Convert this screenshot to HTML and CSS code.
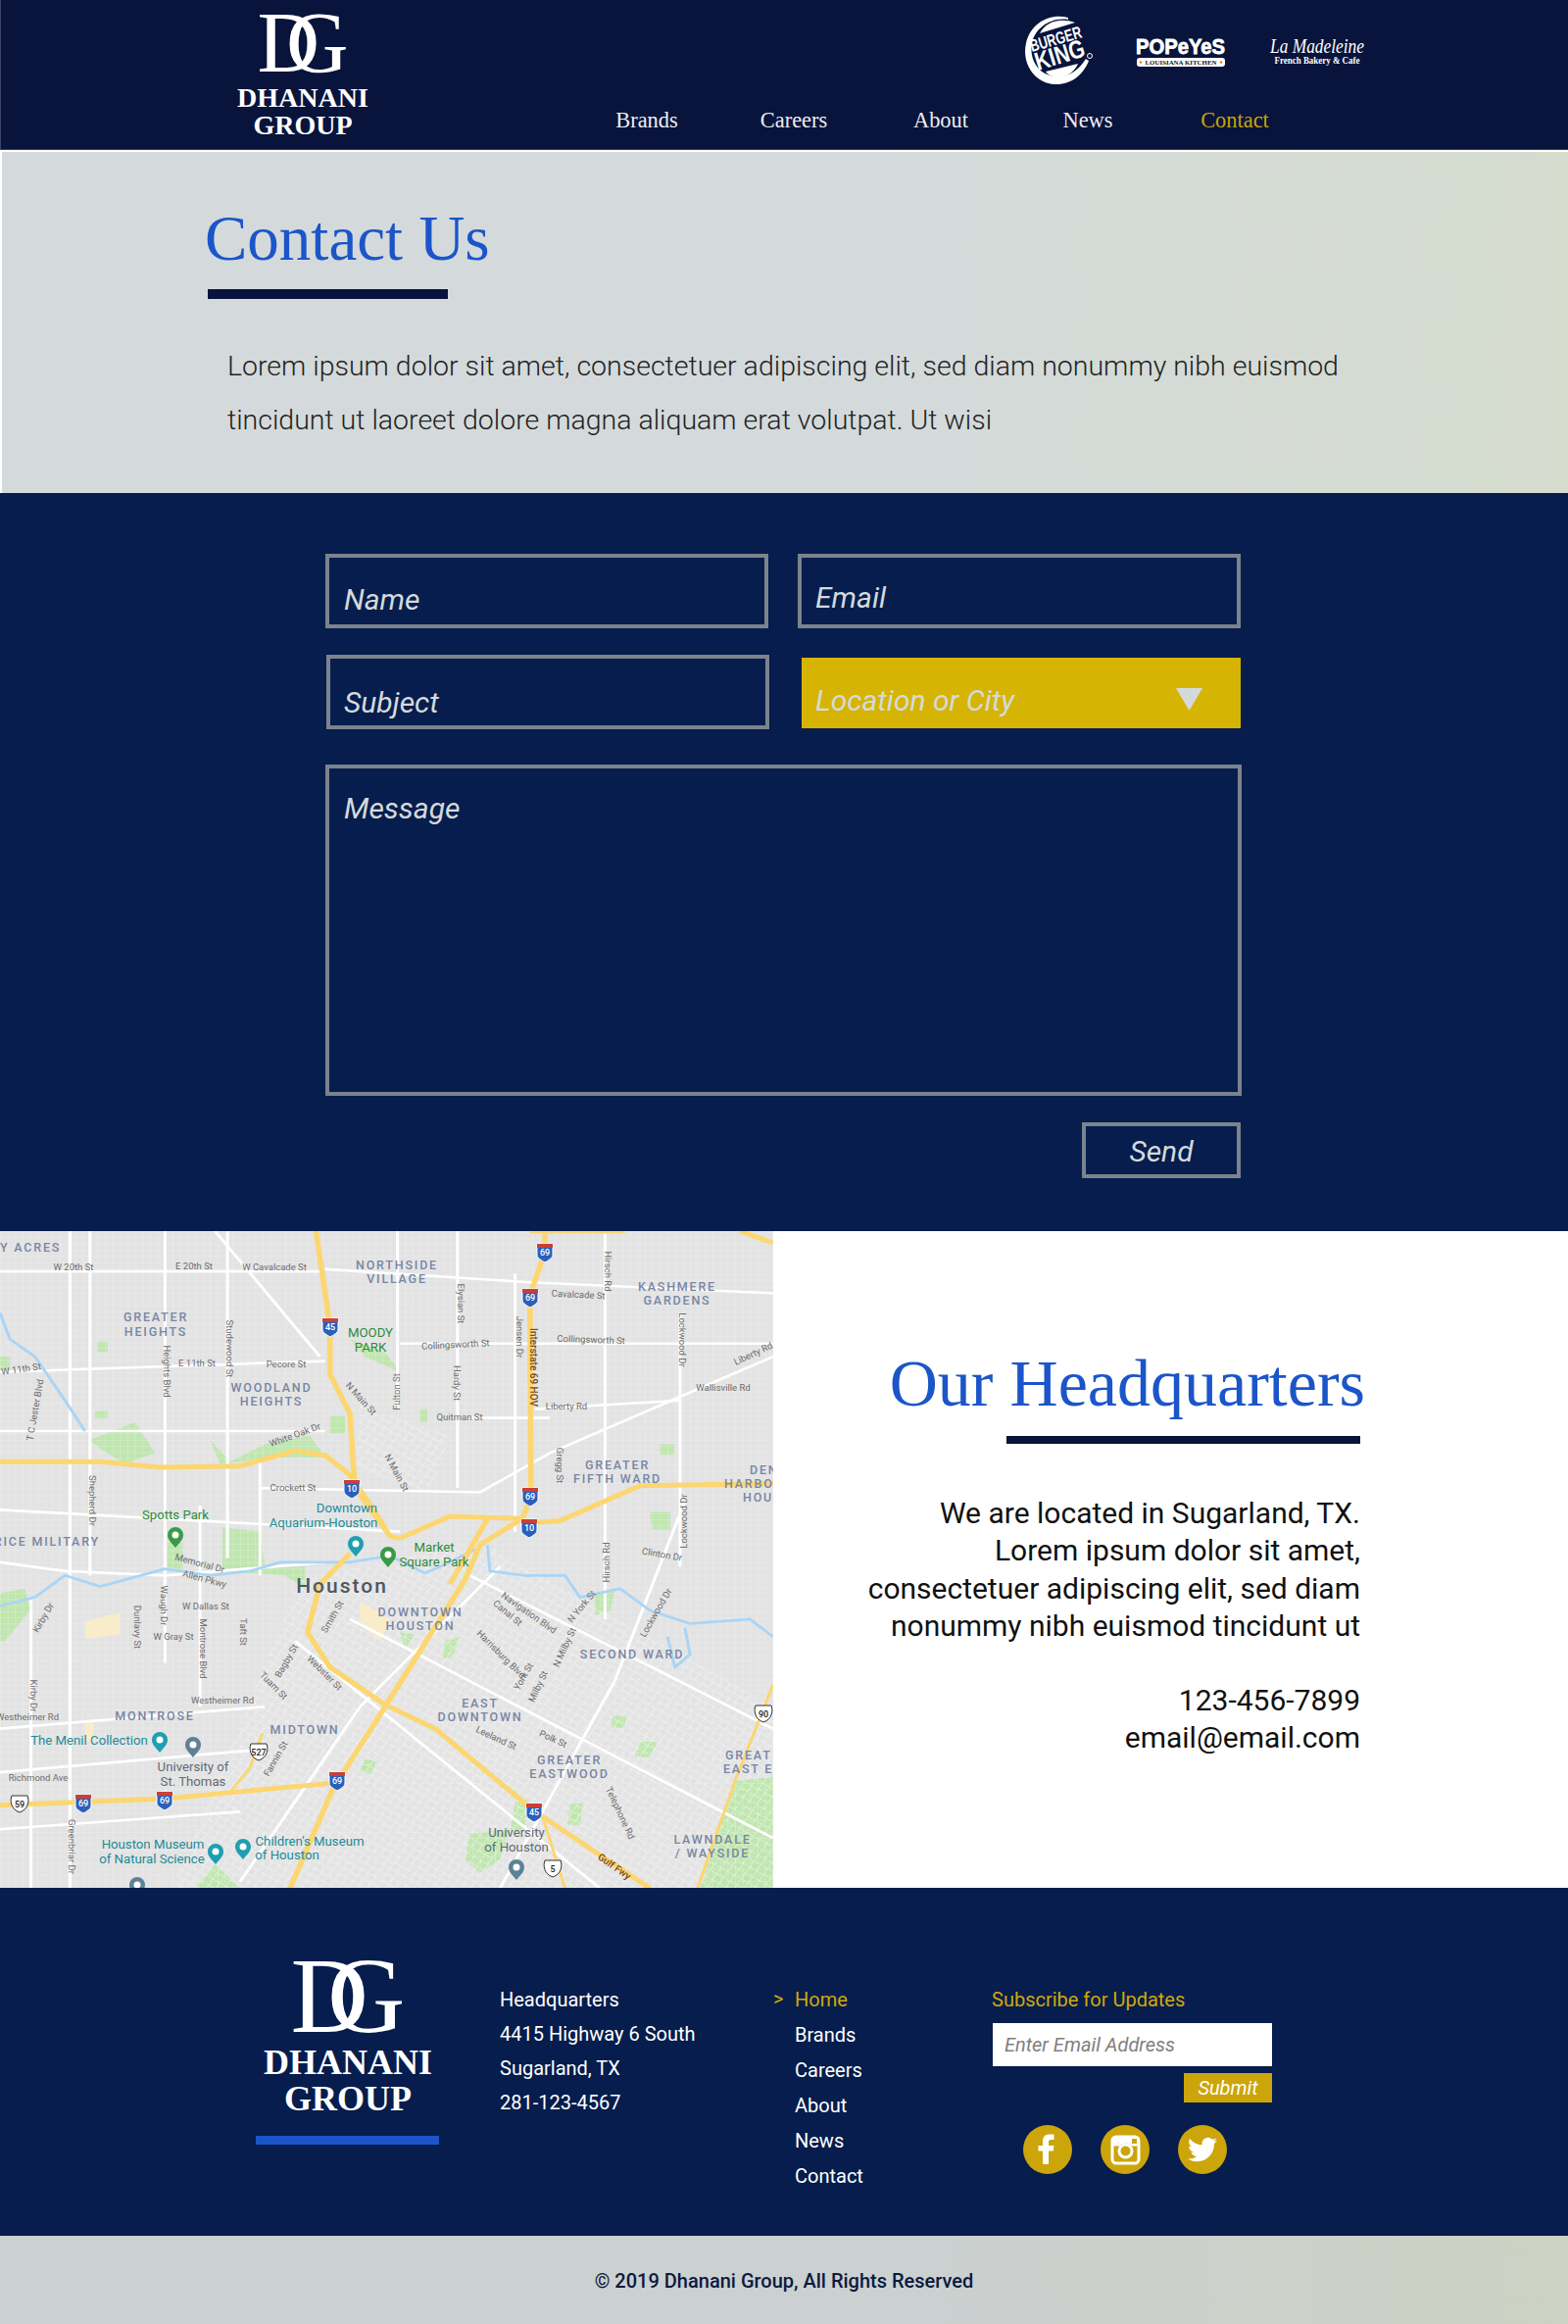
FILE: index.html
```html
<!DOCTYPE html>
<html lang="en">
<head>
<meta charset="utf-8">
<title>Contact Us | Dhanani Group</title>
<link rel="stylesheet" href="styles.css">
</head>
<body>
<header class="site-header">
  <a class="brand">
    <div class="monogram">DG</div>
    <div class="brand-name">DHANANI</div>
    <div class="brand-name">GROUP</div>
  </a>
  <div class="header-right">
    <div class="brand-logos">
      <svg class="logo-bk" width="72" height="72" viewBox="0 0 72 72">
        <path d="M45 2C28-3 7 6 2 28c-5 22 10 41 29 42 16 1 29-9 35-24l-3-2c-8 13-20 20-32 18C14 60 5 44 8 28 11 13 27 1 45 4z" fill="#fff"/>
        <path d="M16 18C21 7 36 1 52 7z" fill="#fff"/>
        <path d="M22 57l33-8C51 58 44 62 36 63c-6 0-11-2-14-6z" fill="#fff"/>
        <text class="bk-text" transform="translate(8 37) rotate(-16)" font-size="17.500" textLength="54" lengthAdjust="spacingAndGlyphs">BURGER</text>
        <text class="bk-text" transform="translate(14 56) rotate(-17)" font-size="26" textLength="52" lengthAdjust="spacingAndGlyphs">KING</text>
        <circle cx="67" cy="41" r="2.500" fill="none" stroke="#fff"/>
      </svg>
      <svg class="logo-popeyes" width="92" height="32" viewBox="0 0 92 32">
        <text class="pop-text" x="0" y="18" font-size="22" textLength="91" lengthAdjust="spacingAndGlyphs">POPeYeS</text>
        <rect x="1" y="22" width="90" height="9" rx="3" fill="#fff"/>
        <circle cx="5" cy="26.500" r="1.300" fill="#e8792b"/>
        <circle cx="87" cy="26.500" r="1.300" fill="#e8792b"/>
        <text class="pop-sub" x="46" y="29" font-size="6.400" text-anchor="middle" textLength="73" lengthAdjust="spacingAndGlyphs">LOUISIANA KITCHEN</text>
      </svg>
      <svg class="logo-lm" width="98" height="32" viewBox="0 0 98 32">
        <text class="lm-name" x="1" y="18" font-size="22" textLength="96" lengthAdjust="spacingAndGlyphs">La Madeleine</text>
        <text class="lm-sub" x="49" y="29" font-size="10" text-anchor="middle" textLength="87" lengthAdjust="spacingAndGlyphs">French Bakery &amp; Cafe</text>
      </svg>
    </div>
    <nav class="main-nav">
      <a>Brands</a><a>Careers</a><a>About</a><a>News</a><a class="is-active">Contact</a>
    </nav>
  </div>
</header>

<section class="hero">
  <h1>Contact Us</h1>
  <div class="hero-bar"></div>
  <p>Lorem ipsum dolor sit amet, consectetuer adipiscing elit, sed diam nonummy nibh euismod tincidunt ut laoreet dolore magna aliquam erat volutpat. Ut wisi</p>
</section>

<section class="contact">
  <form class="contact-form">
    <div class="field field-name">Name</div>
    <div class="field field-email">Email</div>
    <div class="field field-subject">Subject</div>
    <div class="select">
      <span>Location or City</span>
      <svg class="select-arrow" width="27" height="23" viewBox="0 0 27 23"><path d="M0 0h27L13.500 23z" fill="#d4dadb"/></svg>
    </div>
    <div class="field field-message">Message</div>
    <div class="send">Send</div>
  </form>
</section>

<section class="hq">
  <div class="map">
    <svg width="789" height="670" viewBox="0 0 789 670">
      <defs>
        <pattern id="gridA" width="15" height="14" patternUnits="userSpaceOnUse">
          <path d="M0 0H15M0 0V14" stroke="#f5f5f5" stroke-width="1.100" fill="none"/>
        </pattern>
        <pattern id="gridB" width="16" height="16" patternUnits="userSpaceOnUse" patternTransform="rotate(32)">
          <path d="M0 0H16M0 0V16" stroke="#fbfbfb" stroke-width="1.600" fill="none"/>
        </pattern>
        <g id="ihw">
          <path d="M-8-8H8V3C8 7 3 9 0 11-3 9-8 7-8 3z" fill="#2a5fbd" stroke="#fff" stroke-width="1"/>
          <path d="M-8-8H8V-4H-8z" fill="#c8403a"/>
        </g>
        <g id="ush"><path d="M-8-8H8C10-3 9 6 0 9-9 6-10-3-8-8z" fill="#fff" stroke="#333" stroke-width="1"/></g>
        <g id="pin"><path d="M0 0C-4-5-8-8-8-13A8 8 0 0 1 8-13C8-8 4-5 0 0z"/><circle cy="-13" r="3.500" fill="#fff"/></g>
      </defs>
      <rect width="789" height="670" fill="#e3e3e3"/>
      <g transform="translate(0 -5.800) scale(.5102 .4464)">
        <g fill="#bfe6ae">
          <path d="M445 690L520 700 530 780 610 780 610 830 570 800 445 790z"/>
          <path d="M700 260L770 290 800 335 730 300z"/>
          <path d="M180 490L270 450 310 520 250 545 200 510z"/>
          <path d="M420 490L460 540 530 500 620 480 650 530 560 530 440 545z"/>
          <path d="M335 725L365 725 365 790 335 780z"/>
          <path d="M0 840L50 830 60 880 10 950 0 950z"/>
          <path d="M940 1390L1020 1380 1000 1450 960 1480 930 1450z"/>
          <path d="M1470 1270L1546 1260V1515H1400z"/>
          <path d="M390 1515L430 1460 480 1515z"/>
          <path d="M1300 655h40v40h-35z"/><path d="M195 265h20v24h-20z"/><path d="M1320 500h28v24h-28z"/>
          <path d="M1190 840l40-8-10 50-30 8z"/><path d="M890 950l30-10-15 45-20 5z"/><path d="M800 930l30 5-20 35z"/>
          <path d="M730 1220l25 5-15 30-20-8z"/><path d="M1140 1320h25l-5 50h-25z"/><path d="M1225 1120h28l-5 28h-25z"/>
          <path d="M1280 1180h35l-15 35h-30z"/><path d="M1030 1320l25-10-5 70-30 5z"/><path d="M840 420h15v30h-15z"/>
          <path d="M190 425h25v15h-25z"/><path d="M0 300h20v30h-20z"/><path d="M660 435h30v40h-30z"/>
        </g>
        <rect width="1546" height="1530" fill="url(#gridA)"/>
        <path d="M600 810L960 720 1546 1100V1530H340z" fill="url(#gridB)"/>
        <path d="M720 410L900 480 860 610 710 560z" fill="url(#gridB)"/>
        <g fill="#f8eccb">
          <path d="M170 905l70-20v50l-70 10z"/><path d="M720 860l60 40-20 50-40-40z"/><path d="M170 1130h18v50h-18z"/>
        </g>
        <g fill="none" stroke="#fff" stroke-width="6">
          <path d="M140 13V1515M330 13V1000M455 13V760M400 640V1100M62 850V1515M795 13V420M1210 13V900M1360 200V780M915 13V600M180 13V800M520 540V800"/>
          <path d="M0 105H640M650 100L1060 130 1546 155M0 335L650 310M800 270H1546M0 650L800 700M0 1250L500 1200M0 1150L530 1100M0 470L650 470M1070 420L1360 400"/>
          <path d="M1546 300L1100 520 960 610 520 600M940 440H1100M430 13L640 300M1030 110V700M0 770L130 790 330 800 650 770"/>
          <path d="M940 800L1546 1150M1370 630L1230 1040 1000 1515M700 900L1546 1400M480 1500L720 1100 1000 780M590 950L1200 1515M0 1380L480 1340"/>
        </g>
        <g fill="none" stroke="#a9d5f7" stroke-width="6">
          <path d="M0 200L20 260 70 300 130 400 170 470"/>
          <path d="M0 870L70 850 130 800 200 825 330 785 420 800 500 790 560 770 700 770 780 755 850 795 900 770 950 740"/>
          <path d="M975 730L980 790 1050 800 1130 800 1160 850 1240 830 1300 880 1380 910 1500 900 1546 940"/>
          <path d="M1370 920L1380 980 1350 1010 1335 940"/>
        </g>
        <g fill="none" stroke="#fcd670" stroke-width="11" stroke-linejoin="round">
          <path d="M632 13L660 230 660 340 700 430 705 520 710 600 780 710 800 715"/>
          <path d="M0 540L200 540 320 553 480 550 590 515 650 525 700 570 770 690"/>
          <path d="M800 715L900 665 1040 670 1060 680 1120 675 1280 595 1546 590"/>
          <path d="M1090 13L1090 60 1060 160 1062 620 1045 670 960 730 930 810 770 1100 665 1290 580 1515"/>
          <path d="M0 1325L330 1310 660 1275"/>
          <path d="M700 750L640 820 615 930 660 1010 770 1095 870 1150 1070 1340 1300 1515"/>
          <path d="M1060 13L1250 13M1480 13L1546 40M975 670L900 820"/>
        </g>
        <g fill="none" stroke="#fcd670" stroke-width="6">
          <path d="M1085 1350L1130 1515M1546 1050L1470 1270 1395 1515M525 1160L500 1240 460 1295"/>
        </g>
      </g>

      <g class="map-hood">
        <text x="0" y="21">Y ACRES</text>
        <text x="405" y="39" class="mid">NORTHSIDE</text><text x="405" y="53" class="mid">VILLAGE</text>
        <text x="691" y="61" class="mid">KASHMERE</text><text x="691" y="75" class="mid">GARDENS</text>
        <text x="159" y="92" class="mid">GREATER</text><text x="159" y="107" class="mid">HEIGHTS</text>
        <text x="277" y="164" class="mid">WOODLAND</text><text x="277" y="178" class="mid">HEIGHTS</text>
        <text x="630" y="243" class="mid">GREATER</text><text x="630" y="257" class="mid">FIFTH WARD</text>
        <text x="765" y="248">DEN</text><text x="739" y="262">HARBO</text><text x="758" y="276">HOU</text>
        <text x="102" y="321" class="end">RICE MILITARY</text>
        <text x="429" y="393" class="mid">DOWNTOWN</text><text x="429" y="407" class="mid">HOUSTON</text>
        <text x="645" y="436" class="mid">SECOND WARD</text>
        <text x="490" y="486" class="mid">EAST</text><text x="490" y="500" class="mid">DOWNTOWN</text>
        <text x="158" y="499" class="mid">MONTROSE</text>
        <text x="311" y="513" class="mid">MIDTOWN</text>
        <text x="581" y="544" class="mid">GREATER</text><text x="581" y="558" class="mid">EASTWOOD</text>
        <text x="740" y="539">GREAT</text><text x="738" y="553">EAST E</text>
        <text x="727" y="625" class="mid">LAWNDALE</text><text x="727" y="639" class="mid">/ WAYSIDE</text>
      </g>
      <text class="map-city" x="349" y="369" text-anchor="middle">Houston</text>
      <g class="map-poi map-green">
        <text x="378" y="108">MOODY</text><text x="378" y="123">PARK</text>
        <text x="179" y="294">Spotts Park</text>
        <text x="443" y="327">Market</text><text x="443" y="342">Square Park</text>
      </g>
      <g class="map-poi map-teal">
        <text x="354" y="287">Downtown</text><text x="330" y="302">Aquarium-Houston</text>
        <text x="91" y="524">The Menil Collection</text>
        <text x="156" y="630">Houston Museum</text><text x="155" y="645">of Natural Science</text>
        <text x="316" y="627">Children's Museum</text><text x="293" y="641">of Houston</text>
      </g>
      <g class="map-poi map-gray">
        <text x="197" y="551">University of</text><text x="197" y="566">St. Thomas</text>
        <text x="527" y="618">University</text><text x="527" y="633">of Houston</text>
      </g>
      <g class="map-street">
        <text x="75" y="40">W 20th St</text><text x="198" y="39">E 20th St</text><text x="280" y="40">W Cavalcade St</text>
        <text transform="translate(590 68) rotate(3)">Cavalcade St</text>
        <text transform="translate(465 119) rotate(-3)">Collingsworth St</text>
        <text transform="translate(603 114) rotate(2)">Collingsworth St</text>
        <text x="292" y="139">Pecore St</text><text x="201" y="138">E 11th St</text>
        <text transform="translate(22 144) rotate(-8)">W 11th St</text>
        <text x="578" y="182">Liberty Rd</text><text x="469" y="193">Quitman St</text><text x="738" y="163">Wallisville Rd</text>
        <text x="299" y="265">Crockett St</text><text x="210" y="386">W Dallas St</text><text x="177" y="417">W Gray St</text>
        <text x="227" y="482">Westheimer Rd</text><text x="28" y="499">Westheimer Rd</text><text x="39" y="561">Richmond Ave</text>
        <text transform="translate(203 342) rotate(15)">Memorial Dr</text>
        <text transform="translate(208 358) rotate(15)">Allen Pkwy</text>
        <text transform="translate(302 211) rotate(-20)">White Oak Dr</text>
        <text transform="translate(231 120) rotate(90)">Studewood St</text>
        <text transform="translate(167 143) rotate(90)">Heights Blvd</text>
        <text transform="translate(467 74) rotate(90)">Elysian St</text>
        <text transform="translate(527 108) rotate(90)">Jensen Dr</text>
        <text transform="translate(617 41) rotate(90)">Hirsch Rd</text>
        <text transform="translate(693 111) rotate(90)">Lockwood Dr</text>
        <text transform="translate(408 164) rotate(-90)">Fulton St</text>
        <text transform="translate(463 155) rotate(90)">Hardy St</text>
        <text transform="translate(366 173) rotate(48)">N Main St</text>
        <text transform="translate(402 248) rotate(62)">N Main St</text>
        <text transform="translate(568 239) rotate(90)">Gregg St</text>
        <text transform="translate(91 275) rotate(90)">Shepherd Dr</text>
        <text transform="translate(701 296) rotate(-90)">Lockwood Dr</text>
        <text transform="translate(622 338) rotate(-90)">Hirsch Rd</text>
        <text transform="translate(675 333) rotate(10)">Clinton Dr</text>
        <text transform="translate(538 392) rotate(35)">Navigation Blvd</text>
        <text transform="translate(516 392) rotate(40)">Canal St</text>
        <text transform="translate(596 385) rotate(-50)">N York St</text>
        <text transform="translate(672 391) rotate(-60)">Lockwood Dr</text>
        <text transform="translate(509 434) rotate(45)">Harrisburg Blvd</text>
        <text transform="translate(579 426) rotate(-65)">N Milby St</text>
        <text transform="translate(537 456) rotate(-60)">York St</text>
        <text transform="translate(552 466) rotate(-65)">Milby St</text>
        <text transform="translate(47 396) rotate(-60)">Kirby Dr</text>
        <text transform="translate(164 382) rotate(90)">Waugh Dr</text>
        <text transform="translate(137 404) rotate(90)">Dunlavy St</text>
        <text transform="translate(204 426) rotate(90)">Montrose Blvd</text>
        <text transform="translate(245 409) rotate(90)">Taft St</text>
        <text transform="translate(342 395) rotate(-60)">Smith St</text>
        <text transform="translate(295 440) rotate(-60)">Bagby St</text>
        <text transform="translate(329 453) rotate(45)">Webster St</text>
        <text transform="translate(277 466) rotate(45)">Tuam St</text>
        <text transform="translate(284 540) rotate(-60)">Fannin St</text>
        <text transform="translate(505 520) rotate(25)">Leeland St</text>
        <text transform="translate(563 521) rotate(25)">Polk St</text>
        <text transform="translate(630 595) rotate(65)">Telephone Rd</text>
        <text transform="translate(31 474) rotate(90)">Kirby Dr</text>
        <text transform="translate(70 628) rotate(90)">Greenbriar Dr</text>
        <text transform="translate(39 183) rotate(-80)">T C Jester Blvd</text>
        <text transform="translate(770 128) rotate(-25)">Liberty Rd</text>
      </g>
      <text class="map-hwy" transform="translate(541 139) rotate(90)" text-anchor="middle">Interstate 69 HOV</text>
      <text class="map-hwy" transform="translate(625 651) rotate(35)" text-anchor="middle">Gulf Fwy</text>
      <g class="map-shields">
        <use href="#ihw" x="556" y="21"/><text x="556" y="25">69</text>
        <use href="#ihw" x="541" y="67"/><text x="541" y="71">69</text>
        <use href="#ihw" x="337" y="97"/><text x="337" y="101">45</text>
        <use href="#ihw" x="359" y="262"/><text x="359" y="266">10</text>
        <use href="#ihw" x="541" y="270"/><text x="541" y="274">69</text>
        <use href="#ihw" x="540" y="302"/><text x="540" y="306">10</text>
        <use href="#ihw" x="344" y="560"/><text x="344" y="564">69</text>
        <use href="#ihw" x="168" y="580"/><text x="168" y="584">69</text>
        <use href="#ihw" x="85" y="583"/><text x="85" y="587">69</text>
        <use href="#ihw" x="545" y="592"/><text x="545" y="596">45</text>
      </g>
      <g class="map-us">
        <use href="#ush" x="20" y="584"/><text x="20" y="588">59</text>
        <use href="#ush" x="264" y="531"/><text x="264" y="535">527</text>
        <use href="#ush" x="564" y="650"/><text x="564" y="654">5</text>
        <use href="#ush" x="779" y="492"/><text x="779" y="496">90</text>
      </g>
      <g fill="#3b9a46">
        <use href="#pin" x="179" y="323"/><use href="#pin" x="396" y="343"/>
      </g>
      <g fill="#1f9fb0">
        <use href="#pin" x="363" y="332"/><use href="#pin" x="163" y="532"/><use href="#pin" x="220" y="646"/><use href="#pin" x="248" y="641"/>
      </g>
      <g fill="#5d8196">
        <use href="#pin" x="197" y="537"/><use href="#pin" x="527" y="662"/><use href="#pin" x="140" y="680"/>
      </g>
    </svg>
  </div>
  <div class="hq-info">
    <h2>Our Headquarters</h2>
    <div class="hq-bar"></div>
    <p>We are located in Sugarland, TX.<br>Lorem ipsum dolor sit amet,<br>consectetuer adipiscing elit, sed diam<br>nonummy nibh euismod tincidunt ut</p>
    <p class="hq-contact">123-456-7899<br>email@email.com</p>
  </div>
</section>

<footer class="site-footer">
  <div class="footer-brand">
    <div class="monogram monogram-lg">DG</div>
    <div class="footer-name">DHANANI</div>
    <div class="footer-name">GROUP</div>
    <div class="footer-bar"></div>
  </div>
  <ul class="footer-address">
    <li>Headquarters</li>
    <li>4415 Highway 6 South</li>
    <li>Sugarland, TX</li>
    <li>281-123-4567</li>
  </ul>
  <ul class="footer-links">
    <li class="is-active"><span class="caret">&gt;</span>Home</li>
    <li>Brands</li>
    <li>Careers</li>
    <li>About</li>
    <li>News</li>
    <li>Contact</li>
  </ul>
  <div class="subscribe">
    <div class="subscribe-title">Subscribe for Updates</div>
    <div class="subscribe-input">Enter Email Address</div>
    <div class="subscribe-btn">Submit</div>
    <div class="socials">
      <svg width="50" height="50" viewBox="0 0 50 50"><circle cx="25" cy="25" r="25" fill="#cca50a"/><path d="M20 40V26.500H15.500V21H20V16.500C20 12 22.800 9.500 26.500 9.500H31.500V15H28.500C26.600 15 26 16 26 17.500V21H31.500L30.700 26.500H26V40z" fill="#fff"/></svg>
      <svg width="50" height="50" viewBox="0 0 50 50"><circle cx="25" cy="25" r="25" fill="#cca50a"/><rect x="12" y="12" width="27" height="27" rx="4" fill="none" stroke="#fff" stroke-width="3"/><path d="M12 21.500h7a8.500 8.500 0 0 1 13 0h7V15a3 3 0 0 0-3-3H15a3 3 0 0 0-3 3z" fill="#fff"/><circle cx="25.500" cy="26.500" r="6.500" fill="none" stroke="#fff" stroke-width="3"/><rect x="32" y="14" width="5" height="5" fill="#cca50a"/></svg>
      <svg width="50" height="50" viewBox="0 0 50 50"><circle cx="25" cy="25" r="25" fill="#cca50a"/><path transform="translate(10 10) scale(1.250)" d="M23.953 4.570a10 10 0 0 1-2.825.775 4.958 4.958 0 0 0 2.163-2.723c-.951.555-2.005.959-3.127 1.184a4.920 4.920 0 0 0-8.384 4.482C7.690 8.095 4.067 6.130 1.640 3.162a4.822 4.822 0 0 0-.666 2.475c0 1.710.870 3.213 2.188 4.096a4.904 4.904 0 0 1-2.228-.616v.060a4.923 4.923 0 0 0 3.946 4.827 4.996 4.996 0 0 1-2.212.085 4.936 4.936 0 0 0 4.604 3.417 9.867 9.867 0 0 1-6.102 2.105c-.390 0-.779-.023-1.170-.067a13.995 13.995 0 0 0 7.557 2.209c9.053 0 13.998-7.496 13.998-13.985 0-.210 0-.420-.015-.630A9.935 9.935 0 0 0 24 4.590z" fill="#fff"/></svg>
    </div>
  </div>
</footer>
<div class="copyright">© 2019 Dhanani Group, All Rights Reserved</div>
</body>
</html>
```
FILE: styles.css
```css
* { box-sizing: border-box; }
html, body { margin: 0; padding: 0; }
body { background: #fff; font-family: Roboto, "Liberation Sans", sans-serif; width: 1600px; }
ul { list-style: none; margin: 0; padding: 0; }
h1, h2, p { margin: 0; }

/* header */
.site-header {
  display: flex;
  height: 153px;
  background: #08143b;
  border-left: 1px solid #3a4565;
  border-bottom: 1px solid #2d3a60;
  margin-bottom: 2px;
}
.brand { display: block; width: 154px; margin-left: 231px; text-align: center; color: #fff; padding-top: 2px; }
.monogram { font: 400 88px/84px "Liberation Serif", serif; height: 84px; color: #fff; letter-spacing: -34px; padding-right: 34px; white-space: nowrap; }
.brand-name { font: 700 28px/28px "Liberation Serif", serif; }
.header-right { margin-left: 199px; padding-top: 17px; }
.brand-logos { display: flex; align-items: center; height: 70px; margin-left: 460px; }
.logo-bk { flex: none; }
.logo-popeyes { margin-left: 42px; margin-top: 2px; flex: none; }
.logo-lm { margin-left: 44px; margin-top: -1px; flex: none; }
.lm-name { font-family: "Liberation Serif", serif; font-style: italic; fill: #fff; }
.lm-sub { font-family: "Liberation Serif", serif; font-weight: 700; fill: #fff; }
.bk-text { font-family: "Liberation Sans", sans-serif; font-weight: 700; fill: #fff; }
.pop-text { font-family: "Liberation Sans", sans-serif; font-weight: 700; fill: #fff; stroke: #fff; stroke-width: .8px; }
.pop-sub { font-family: "Liberation Serif", serif; font-weight: 700; fill: #111; }
.main-nav { display: grid; grid-template-columns: repeat(5, 150px); margin-top: 23px; }
.main-nav a { text-align: center; font: 400 22.400px/26px "Liberation Serif", serif; color: #eceef2; }
.main-nav a.is-active { color: #c9a30a; }

/* hero */
.hero {
  height: 348px;
  background: linear-gradient(90deg, #d4dadb 0%, #d4dadb 55%, #d5dcce 100%);
  border-left: 2px solid #fff;
  padding: 50px 0 0 207px;
}
.hero h1 { font: 400 65px/76px "Liberation Serif", serif; color: #1b55c9; }
.hero-bar { width: 245px; height: 10px; background: #08143b; margin: 14px 0 0 3px; }
.hero p { width: 1160px; margin: 41px 0 0 23px; font: 300 28.500px/55px Roboto, sans-serif; color: #222; }

/* form */
.contact { height: 753px; background: #061d4d; padding: 62px 0 0 332px; }
.contact-form { display: grid; width: 935px; grid-template-columns: 452px 452px; column-gap: 30px; }
.field {
  border: 4px solid #7b838c;
  color: #d4dadb;
  font: italic 400 30px/36px Roboto, sans-serif;
  padding-left: 15px;
}
.field-name { height: 76px; padding-top: 25px; }
.field-email { height: 76px; padding-top: 23px; padding-left: 14px; }
.field-subject { height: 76px; margin: 27px -1px 0 1px; padding-left: 14px; padding-top: 27px; }
.select {
  display: flex;
  justify-content: space-between;
  height: 72px;
  margin: 30px 0 0 4px;
  background: #d6b404;
  color: #d4dadb;
  font: italic 400 30px/36px Roboto, sans-serif;
  padding: 26px 39px 0 14px;
}
.select-arrow { margin-top: 5px; }
.field-message { grid-column: 1 / 3; height: 338px; margin: 36px -1px 0 0; padding-top: 23px; }
.send {
  grid-column: 2;
  justify-self: end;
  width: 162px;
  height: 57px;
  margin-top: 27px;
  border: 4px solid #7b838c;
  color: #d4dadb;
  text-align: center;
  font: italic 400 30px/52px Roboto, sans-serif;
}

/* headquarters */
.hq { display: flex; height: 670px; }
.map { width: 789px; flex: none; }
.map svg { display: block; }
.map-hood text { font: 500 12.500px Roboto, sans-serif; letter-spacing: 1.800px; fill: #7886a4; }
.map-hood .mid { text-anchor: middle; }
.map-hood .end { text-anchor: end; }
.map-city { font: 500 21px Roboto, sans-serif; letter-spacing: 2px; fill: #4c5763; }
.map-poi text { font: 400 13.200px Roboto, sans-serif; text-anchor: middle; }
.map-green text { fill: #2f8a3c; }
.map-teal text { fill: #1c8b98; }
.map-gray text { fill: #5f6a74; }
.map-street text { font: 400 9.500px Roboto, sans-serif; fill: #6d6d6d; text-anchor: middle; }
.map-hwy { font: 500 10px Roboto, sans-serif; fill: #7a4a10; }
.map-shields text { font: 500 9px Roboto, sans-serif; fill: #fff; text-anchor: middle; }
.map-us text { font: 500 9px Roboto, sans-serif; fill: #222; text-anchor: middle; }
.hq-info { flex: 1; padding: 116px 212px 0 0; text-align: right; color: #111; }
.hq-info h2 { font: 400 68px/78px "Liberation Serif", serif; color: #1b55c9; margin-right: -5px; white-space: nowrap; }
.hq-bar { width: 361px; height: 8px; background: #08143b; margin: 15px 0 0 auto; }
.hq-info p { font: 400 30px/38.400px Roboto, sans-serif; margin-top: 52px; }
.hq-info .hq-contact { margin-top: 37px; }

/* footer */
.site-footer { display: flex; height: 355px; background: #061d4d; color: #fff; }
.footer-brand { width: 186px; margin-left: 262px; padding-top: 62px; text-align: center; }
.monogram-lg { font-size: 110px; line-height: 96px; height: 98px; letter-spacing: -42px; padding-right: 42px; }
.footer-name { font: 700 36px/37px "Liberation Serif", serif; }
.footer-bar { height: 9px; background: #1b55c9; margin: 19px 0 0 -1px; }
.footer-address { width: 279px; margin-left: 62px; padding-top: 97px; font: 400 20px/35px Roboto, sans-serif; }
.footer-links { width: 224px; margin-left: 0; padding-top: 96px; padding-left: 22px; font: 400 20px/36px Roboto, sans-serif; }
.footer-links .is-active { color: #d0a80a; position: relative; }
.caret { position: absolute; left: -22px; top: -1px; }
.subscribe { width: 285px; padding-top: 101px; }
.subscribe-title { font: 400 20px/26px Roboto, sans-serif; color: #d0a80a; margin-left: -1px; }
.subscribe-input {
  height: 44px;
  margin-top: 11px;
  background: #fff;
  color: #808080;
  font: italic 400 20px/44px Roboto, sans-serif;
  padding-left: 12px;
}
.subscribe-btn {
  width: 90px;
  height: 30px;
  margin: 7px 0 0 auto;
  background: #cca50a;
  color: #fff;
  text-align: center;
  font: italic 400 20px/30px Roboto, sans-serif;
}
.socials { display: flex; gap: 29px; margin: 23px 0 0 31px; }

.copyright {
  height: 90px;
  background: linear-gradient(90deg, #cbd0d0 0%, #cbd0d0 60%, #cdd2c4 100%);
  color: #0a1a3e;
  text-align: center;
  font: 500 20px/92px Roboto, sans-serif;
}
```
